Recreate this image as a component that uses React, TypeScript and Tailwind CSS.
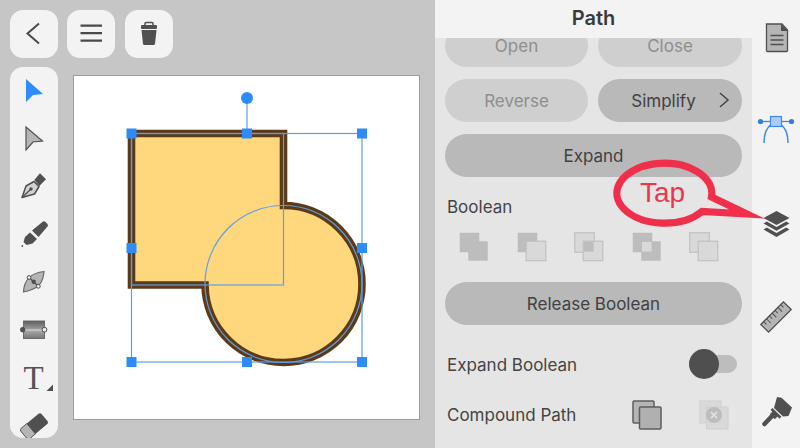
import React from "react";

const DARK = "#505050";
const MID = "#b5b5b5";
const BLUE = "#2e8bfa";

function Ico({ children, w = 48, h = 48 }: { children: React.ReactNode; w?: number; h?: number }) {
  return (
    <svg width={w} height={h} viewBox={`0 0 ${w} ${h}`} className="block shrink-0">
      {children}
    </svg>
  );
}

function TopBtn({ children, className = "" }: { children: React.ReactNode; className?: string }) {
  return <div className={`w-12 h-12 rounded-[13px] bg-[#f3f3f3] shrink-0 ${className}`}>{children}</div>;
}

function Tools() {
  return (
    <div className="w-12 h-[371px] rounded-[13px] bg-[#f3f3f3] overflow-hidden shrink-0">
      <Ico><polygon points="16,12 33,27 23,28 16,35" fill={BLUE} /></Ico>
      <Ico><polygon points="16,12 32.5,26 23,27 16,35" fill={MID} stroke={DARK} strokeWidth="1.2" /></Ico>
      <Ico>
        <path d="M12 34.5 L16 23 L24 18.5 L29 23.5 L24.5 31 Z" fill="#d2d2d2" stroke={DARK} strokeWidth="1.5" strokeLinejoin="round" />
        <path d="M12 34.5 L20.5 26.5" stroke={DARK} strokeWidth="1.2" />
        <circle cx="21" cy="26" r="1.7" fill={DARK} />
        <polygon points="24.3,17 30,10.3 36,16.3 29.3,23" fill={DARK} />
      </Ico>
      <Ico>
        <path d="M13.5 31 L15 26 L20 21.5 L27 28 L22.5 32.5 L16.5 34 Z" fill={DARK} />
        <path d="M22 19.5 L33 10.5 Q34.5 10 35.5 11 L37.5 13 Q38.5 14.5 37.5 15.5 L28.5 26 Z" fill={DARK} />
        <circle cx="12.3" cy="35" r="0.9" fill={DARK} />
      </Ico>
      <Ico>
        <path d="M13.5 33 C14 22 20 14 34 12.5 C33 24 29 30 13.5 33 Z" fill={MID} stroke="#6a6a6a" strokeWidth="1.2" />
        <path d="M19 18.5 L28.3 27.3" stroke={DARK} strokeWidth="1.2" />
        <circle cx="23.7" cy="22.8" r="2.2" fill={DARK} />
        <circle cx="19" cy="18.5" r="1.9" fill="#f3f3f3" stroke={DARK} />
        <circle cx="28.3" cy="27.3" r="1.9" fill="#f3f3f3" stroke={DARK} />
      </Ico>
      <Ico>
        <defs>
          <linearGradient id="gr" x1="0" y1="0" x2="0" y2="1">
            <stop offset="0" stopColor="#5c5c5c" />
            <stop offset="0.55" stopColor="#a8a8a8" />
            <stop offset="1" stopColor="#777" />
          </linearGradient>
        </defs>
        <rect x="13.5" y="14" width="21" height="17.5" fill="url(#gr)" stroke="#6a6a6a" />
        <path d="M13 23 H34" stroke="#e8e8e8" strokeWidth="0.8" />
        <circle cx="12.7" cy="22.7" r="2.6" fill={DARK} />
        <circle cx="34.5" cy="22.7" r="2.4" fill="#e8e8e8" stroke={DARK} />
      </Ico>
      <Ico>
        <text x="23.5" y="34" textAnchor="middle" fontSize="33" fill="#555555" fontFamily="'Liberation Serif', serif">T</text>
        <polygon points="36.5,36 43,29.5 43,36" fill={DARK} />
      </Ico>
      <Ico>
        <g transform="rotate(-40 24 23)">
          <rect x="10.5" y="16.5" width="27" height="13.5" rx="2.5" fill={DARK} />
          <path d="M20 16.5 H13 Q10.5 16.5 10.5 19 V27.5 Q10.5 30 13 30 H20 Z" fill={MID} stroke={DARK} strokeWidth="0.8" />
        </g>
      </Ico>
    </div>
  );
}

function Art() {
  const handles: [number, number][] = [
    [131.5, 133.5], [247, 133.5], [362, 133.5],
    [131.5, 248], [362, 248],
    [131.5, 362], [247, 362], [362, 362],
  ];
  const union = "M131.5 133.5 H283.5 V205.5 A78.5 78.5 0 1 1 205 285 H131.5 Z";
  return (
    <div className="ml-[15px] mt-[8px] w-[347px] h-[345px] border border-[#9a9a9a] bg-white shrink-0">
      <svg width="345" height="343" viewBox="74 76 345 343" className="block">
        <path d={union} fill="#ffd77d" stroke="#5c3a17" strokeWidth="7.6" />
        <g fill="none" stroke="#5c9fe6" strokeWidth="1.2">
          <rect x="131.5" y="133.5" width="152" height="151.5" />
          <circle cx="283.5" cy="284" r="78.5" />
          <rect x="131.5" y="133.5" width="230.5" height="228.5" />
          <path d="M247 98 V133" />
        </g>
        <circle cx="247" cy="98" r="6" fill={BLUE} />
        {handles.map(([x, y]) => (
          <rect key={`${x}-${y}`} x={x - 5} y={y - 5} width="10" height="10" fill={BLUE} />
        ))}
      </svg>
    </div>
  );
}

function Pill({ label, active, className = "", chevron }: { label: string; active?: boolean; className?: string; chevron?: boolean }) {
  return (
    <div
      className={`relative h-[43px] rounded-[22px] flex items-center justify-center text-[17px] pt-[3px] ${
        chevron ? "pr-[13px]" : ""
      } ${active ? "bg-[#b9b9b9] text-[#414141]" : "bg-[#cfcfcf] text-[#8e8e8e]"} ${className}`}
    >
      {label}
      {chevron && (
        <svg width="12" height="18" viewBox="0 0 12 18" className="absolute right-[12px] top-[12px]">
          <path d="M2 2 L10 9 L2 16" fill="none" stroke="#444" strokeWidth="1.5" />
        </svg>
      )}
    </div>
  );
}

function BoolIcon({ back, front, overlap, backStroke, frontStroke }: { back: string; front: string; overlap?: string; backStroke?: boolean; frontStroke?: boolean }) {
  const s = "#c2c2c2";
  return (
    <svg width="30" height="30" viewBox="0 0 30 30" className="block shrink-0">
      <rect x="0.75" y="0.75" width="19.5" height="19.5" fill={back} stroke={backStroke ? s : "none"} strokeWidth="1.3" />
      <rect x="9.25" y="9.25" width="19.5" height="19.5" fill={front} stroke={frontStroke ? s : "none"} strokeWidth="1.3" />
      {overlap && <rect x="9.9" y="9.9" width="9.7" height="9.7" fill={overlap} />}
    </svg>
  );
}

function Panel() {
  return (
    <div className="w-[317px] bg-[#e5e5e5] shrink-0 overflow-hidden">
      <div className="relative z-10 h-[38px] pb-[2px] bg-[#f3f3f3] flex items-center justify-center text-[20px] font-semibold text-[#3a3a3a]">
        Path
      </div>
      <div className="-mt-[14px] px-[10px]">
        <div className="flex gap-[10px]">
          <Pill label="Open" className="w-[143px]" />
          <Pill label="Close" className="w-[144px]" />
        </div>
        <div className="flex gap-[10px] mt-[12px]">
          <Pill label="Reverse" className="w-[143px]" />
          <Pill label="Simplify" active chevron className="w-[144px]" />
        </div>
        <Pill label="Expand" active className="mt-[12px] w-[297px]" />
        <div className="mt-[19px] ml-[2px] text-[17px] leading-[22px] text-[#444]">Boolean</div>
        <div className="mt-[14px] ml-[14px] flex gap-[27.6px]">
          <BoolIcon back="#bdbdbd" front="#bdbdbd" />
          <BoolIcon back="#bdbdbd" front="#d9d9d9" frontStroke />
          <BoolIcon back="#d9d9d9" front="#d9d9d9" overlap="#bdbdbd" backStroke frontStroke />
          <BoolIcon back="#bdbdbd" front="#bdbdbd" overlap="#d9d9d9" />
          <BoolIcon back="#d9d9d9" front="#d9d9d9" backStroke frontStroke />
        </div>
        <Pill label="Release Boolean" active className="mt-[20px] w-[297px]" />
        <div className="mt-[24px] ml-[2px] h-[30px] flex items-center justify-between text-[17px] text-[#444]">
          <span className="mt-[3px]">Expand Boolean</span>
          <div className="relative w-[48px] h-[18px] rounded-full bg-[#bdbdbd] mr-[5px]">
            <div className="absolute left-0 -top-[6px] w-[30px] h-[30px] rounded-full bg-[#4f4f4f]" />
          </div>
        </div>
        <div className="mt-[21px] ml-[2px] h-[30px] flex items-center text-[17px] text-[#444]">
          <span className="w-[185px] mt-[2px]">Compound Path</span>
          <svg width="30" height="30" viewBox="0 0 30 30" className="block shrink-0">
            <rect x="1" y="1" width="21" height="22" rx="1" fill={MID} stroke="#5e5e5e" strokeWidth="1.5" />
            <rect x="7.5" y="7" width="21.5" height="22" rx="1" fill="#b0b0b0" stroke="#5e5e5e" strokeWidth="1.5" />
          </svg>
          <svg width="30" height="30" viewBox="0 0 30 30" className="block shrink-0 ml-[37px]">
            <rect x="1" y="1" width="21" height="22" fill="#d9d9d9" stroke="#cfcfcf" />
            <rect x="7.5" y="7" width="21.5" height="22" fill="#d9d9d9" stroke="#cfcfcf" />
            <circle cx="15" cy="15" r="8" fill="#bdbdbd" />
            <path d="M12 12 L18 18 M18 12 L12 18" stroke="#e5e5e5" strokeWidth="1.5" />
          </svg>
        </div>
      </div>
    </div>
  );
}

function Rail() {
  return (
    <div className="w-12 bg-[#f3f3f3] flex flex-col pt-[14px] gap-[47.4px] shrink-0">
      <Ico h={46}>
        <path d="M14.5 10 H30 L35.5 16 V36.5 Q35.5 37.5 34.5 37.5 H15.5 Q14.5 37.5 14.5 36.5 Z" fill={MID} stroke={DARK} strokeWidth="1.3" />
        <path d="M29 10 L36 17 H29 Z" fill={DARK} />
        <path d="M18.5 21.5 H31.5 M18.5 26 H31.5 M18.5 30.5 H31.5" stroke={DARK} strokeWidth="1.3" />
      </Ico>
      <Ico h={46}>
        <g transform="translate(0 7)">
          <path d="M8 7.5 H40" stroke="#3d8be8" strokeWidth="1.3" />
          <path d="M12 29 C12 18 15 13 20 10 M36 29 C36 18 33 13 28 10" fill="none" stroke="#3d8be8" strokeWidth="1.5" />
          <circle cx="8.5" cy="7.5" r="2.6" fill="#2d80e0" />
          <circle cx="39.5" cy="7.5" r="2.6" fill="#2d80e0" />
          <rect x="18.5" y="2.5" width="11" height="10" fill="#a9cdf8" stroke="#3d8be8" strokeWidth="1.2" />
        </g>
      </Ico>
      <Ico h={46}>
        <path d="M24.5 10 L37.5 17 L24.5 24 L11.5 17 Z" fill={DARK} />
        <path d="M14.8 20.5 L24.5 26 L34.2 20.5 L37.5 22.5 L24.5 29.8 L11.5 22.5 Z" fill={DARK} />
        <path d="M14.8 26.5 L24.5 32 L34.2 26.5 L37.5 28.5 L24.5 36 L11.5 28.5 Z" fill={DARK} />
      </Ico>
      <Ico h={46}>
        <g transform="rotate(-45 24 23)">
          <rect x="8" y="17.5" width="32" height="11" fill={MID} stroke={DARK} strokeWidth="1.3" />
          <path d="M12 17.5 V21.5 M16 17.5 V23.5 M20 17.5 V21.5 M24 17.5 V23.5 M28 17.5 V21.5 M32 17.5 V23.5 M36 17.5 V21.5" stroke={DARK} strokeWidth="1" />
        </g>
      </Ico>
      <Ico h={46}>
        <polygon points="25,9 29.5,9.8 40,19.5 36.5,28 31,28.5 22,20" fill={DARK} />
        <path d="M19.5 21 L28.5 29.8" stroke={DARK} strokeWidth="2.6" />
        <path d="M20 28 L12.5 36" stroke={DARK} strokeWidth="4.5" strokeLinecap="round" />
        <path d="M19.5 24.5 L24.5 29.5" stroke={DARK} strokeWidth="5" />
      </Ico>
    </div>
  );
}

export default function App() {
  return (
    <div
      className="relative w-[800px] h-[448px] flex overflow-hidden"
      style={{ fontFamily: "Inter, 'Liberation Sans', sans-serif" }}
    >
      <div className="w-[435px] h-full bg-[#c6c6c6] pt-[10px] pl-[10px] shrink-0">
        <div className="flex">
          <TopBtn className="mr-[9px]">
            <Ico><path d="M29 13.5 L17.5 23.5 L29 33.5" fill="none" stroke="#4a4a4a" strokeWidth="2" /></Ico>
          </TopBtn>
          <TopBtn className="mr-[10px]">
            <Ico><path d="M13.5 15.7 H35 M13.5 23.2 H35 M13.5 30.7 H35" stroke="#4a4a4a" strokeWidth="2.2" /></Ico>
          </TopBtn>
          <TopBtn>
            <Ico>
              <path d="M20 15 V13.5 Q20 12.5 21 12.5 H27 Q28 12.5 28 13.5 V15" fill="none" stroke={DARK} strokeWidth="1.5" />
              <rect x="16" y="15" width="16" height="4" rx="1" fill={DARK} />
              <path d="M16.5 20 H31.5 L30 34 Q29.8 35 28.5 35 H19.5 Q18.2 35 18 34 Z" fill={DARK} />
            </Ico>
          </TopBtn>
        </div>
        <div className="flex mt-[9px]">
          <Tools />
          <Art />
        </div>
      </div>
      <Panel />
      <Rail />
      <svg width="180" height="90" viewBox="600 150 180 90" className="absolute left-[600px] top-[150px]">
        <path
          d="M711.5 197 L747 214 L702 211.5 A47.5 30 0 1 1 711.5 197 Z"
          fill="none"
          stroke="#ef2f4b"
          strokeWidth="7.2"
          strokeMiterlimit="12"
        />
      </svg>
      <div
        className="absolute left-[640px] top-[178px] text-[28px] leading-[30px] text-[#e83850]"
        style={{ fontFamily: "'Liberation Sans', sans-serif" }}
      >
        Tap
      </div>
    </div>
  );
}
